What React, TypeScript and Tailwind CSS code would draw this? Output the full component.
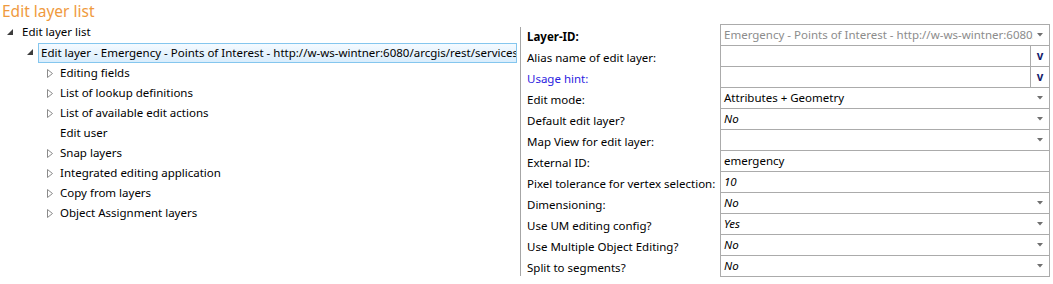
import React from "react";

const FONT = { fontFamily: '"Noto Sans", "Open Sans", sans-serif' };

function Expanded() {
  return (
    <svg width="7" height="7" viewBox="0 0 7 7" className="shrink-0">
      <polygon points="6,0 6,6 0,6" fill="#3c3c3c" />
    </svg>
  );
}

function Collapsed() {
  return (
    <svg width="6" height="9" viewBox="0 0 6 9" className="shrink-0">
      <polygon points="0.5,0.5 5.5,4.5 0.5,8.5" fill="none" stroke="#8a8a8a" strokeWidth="1" />
    </svg>
  );
}

function Arrow() {
  return (
    <svg width="6" height="4" viewBox="0 0 6 4" className="shrink-0">
      <polygon points="0,0 6,0 3,3.5" fill="#707070" />
    </svg>
  );
}

const children: { label: string; leaf?: boolean }[] = [
  { label: "Editing fields" },
  { label: "List of lookup definitions" },
  { label: "List of available edit actions" },
  { label: "Edit user", leaf: true },
  { label: "Snap layers" },
  { label: "Integrated editing application" },
  { label: "Copy from layers" },
  { label: "Object Assignment layers" },
];

type Prop = {
  label: string;
  value?: string;
  kind: "select" | "text" | "button";
  italic?: boolean;
  muted?: boolean;
  bold?: boolean;
  blue?: boolean;
};

const props: Prop[] = [
  { label: "Layer-ID:", bold: true, kind: "select", muted: true, value: "Emergency - Points of Interest - http://w-ws-wintner:6080/arcgis/rest/services/SampleWorldCities" },
  { label: "Alias name of edit layer:", kind: "button" },
  { label: "Usage hint:", blue: true, kind: "button" },
  { label: "Edit mode:", kind: "select", value: "Attributes + Geometry" },
  { label: "Default edit layer?", kind: "select", value: "No", italic: true },
  { label: "Map View for edit layer:", kind: "select" },
  { label: "External ID:", kind: "text", value: "emergency" },
  { label: "Pixel tolerance for vertex selection:", kind: "text", value: "10", italic: true },
  { label: "Dimensioning:", kind: "select", value: "No", italic: true },
  { label: "Use UM editing config?", kind: "select", value: "Yes", italic: true },
  { label: "Use Multiple Object Editing?", kind: "select", value: "No", italic: true },
  { label: "Split to segments?", kind: "select", value: "No", italic: true },
];

export default function App() {
  return (
    <div className="w-[1053px] h-[284px] bg-white text-black overflow-hidden text-[11.5px]" style={FONT}>
      <div className="h-[22px] pl-[2px] pt-[1px] text-[15.5px] leading-[20px] text-[#ef9a3e]">Edit layer list</div>
      <div className="flex">
        <div className="w-[520px] shrink-0">
          <div className="h-[20px] flex items-center pl-[7px]">
            <Expanded />
            <span className="ml-[8px]">Edit layer list</span>
          </div>
          <div className="h-[21px] flex items-center pl-[27px]">
            <Expanded />
            <div className="ml-[4px] w-[479px] h-[20px] flex items-center border border-[#84c6ee] bg-gradient-to-b from-[#f4faff] to-[#d9edfc] pl-[2px] overflow-hidden whitespace-nowrap">
              Edit layer - Emergency - Points of Interest - http://w-ws-wintner:6080/arcgis/rest/services/SampleWorldCities
            </div>
          </div>
          {children.map((c) => (
            <div key={c.label} className="h-[20px] flex items-center pl-[47px]">
              <span className="w-[6px] flex">{c.leaf ? null : <Collapsed />}</span>
              <span className="ml-[7px]">{c.label}</span>
            </div>
          ))}
        </div>
        <div className="flex-1 border-l border-[#a6a6a6] mt-[5px] pl-[6px]">
          <div className="-mt-[3px]">
            {props.map((p, i) => (
              <div key={p.label} className="flex h-[21px]">
                <div
                  className={
                    "w-[193px] shrink-0 pt-[5px] leading-[16px] whitespace-nowrap " +
                    (p.bold ? "font-bold " : "") +
                    (p.blue ? "text-[#2a22e0]" : "")
                  }
                >
                  {p.label}
                </div>
                <div
                  className={
                    "w-[330px] flex border-x border-t border-[#ababab] " +
                    (i === props.length - 1 ? "border-b h-[22px]" : "h-[21px]")
                  }
                >
                  <div
                    className={
                      "flex-1 min-w-0 overflow-hidden whitespace-nowrap pl-[3px] leading-[19px] " +
                      (p.italic ? "italic " : "") +
                      (p.muted ? "text-[#8c8c8c]" : "")
                    }
                  >
                    {p.value}
                  </div>
                  {p.kind === "select" && (
                    <div className="w-[16px] flex items-center justify-center pr-[2px]">
                      <Arrow />
                    </div>
                  )}
                  {p.kind === "button" && (
                    <div className="w-[19px] border-l border-[#ababab] flex items-center justify-center font-bold text-[#14206a] leading-none">
                      v
                    </div>
                  )}
                </div>
              </div>
            ))}
          </div>
        </div>
      </div>
    </div>
  );
}
